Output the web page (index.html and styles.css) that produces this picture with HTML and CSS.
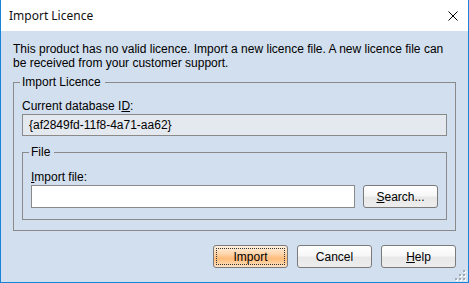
FILE: index.html
```html
<!DOCTYPE html>
<html>
<head>
<meta charset="utf-8">
<link rel="stylesheet" href="styles.css">
</head>
<body>
<div class="window">
  <div class="titlebar">
    <span class="title">Import Licence</span>
    <svg class="close" width="10" height="10" viewBox="0 0 10 10"><path d="M0.5 0.5 L9.5 9.5 M9.5 0.5 L0.5 9.5" stroke="#000" stroke-width="1" fill="none"/></svg>
  </div>
  <div class="content">
    <p class="message">This product has no valid licence. Import a new licence file. A new licence file can<br>be received from your customer support.</p>
    <fieldset class="group outer">
      <legend>Import Licence</legend>
      <label class="field-label">Current database I<u>D</u>:</label>
      <div class="readonly">{af2849fd-11f8-4a71-aa62}</div>
      <fieldset class="group inner">
        <legend>File</legend>
        <label class="field-label"><u>I</u>mport file:</label>
        <div class="file-row">
          <div class="input"></div>
          <button class="btn"><u>S</u>earch...</button>
        </div>
      </fieldset>
    </fieldset>
    <div class="actions">
      <button class="btn default"><span class="focus">Import</span></button>
      <button class="btn">Cancel</button>
      <button class="btn"><u>H</u>elp</button>
    </div>
  </div>
  <svg class="grip" width="11" height="11" viewBox="0 0 11 11">
    <g fill="#fff"><rect x="9" y="1" width="2" height="2"/><rect x="5" y="5" width="2" height="2"/><rect x="9" y="5" width="2" height="2"/><rect x="1" y="9" width="2" height="2"/><rect x="5" y="9" width="2" height="2"/><rect x="9" y="9" width="2" height="2"/></g>
    <g fill="#a3a9b3"><rect x="8" y="0" width="2" height="2"/><rect x="4" y="4" width="2" height="2"/><rect x="8" y="4" width="2" height="2"/><rect x="0" y="8" width="2" height="2"/><rect x="4" y="8" width="2" height="2"/><rect x="8" y="8" width="2" height="2"/></g>
  </svg>
</div>
</body>
</html>
```
FILE: styles.css
```css
body {
  margin: 0;
  font-family: "Liberation Sans", Arial, sans-serif;
  font-size: 12px;
  color: #000;
}
.window {
  position: relative;
  width: 469px;
  height: 283px;
  box-sizing: border-box;
  border: 1px solid #1883d7;
  border-top: none;
  background: #d2dfee;
  display: flex;
  flex-direction: column;
}
.titlebar {
  height: 31px;
  background: #fff;
  display: flex;
  align-items: center;
  justify-content: space-between;
  padding: 0 10px 0 8px;
}
.title {
  font-family: "Noto Sans", "Open Sans", sans-serif;
  font-size: 12px;
  color: #111;
}
.close { display: block; }
.content {
  padding: 11px 12px 0 12px;
}
.message {
  margin: 0;
  line-height: 14px;
  white-space: nowrap;
}
.group {
  margin: 0;
  border: 1px solid #8a8a8a;
  padding: 10px 8px 10px 8px;
  min-width: 0;
}
.group legend {
  padding: 0 4px 0 2px;
  margin-left: -2px;
  line-height: 14px;
}
.outer { margin-top: 5px; }
.inner {
  margin-top: 9px;
  padding-top: 11px;
  padding-bottom: 11px;
}
.field-label {
  display: block;
  line-height: 14px;
  margin-bottom: 1px;
}
.readonly {
  height: 22px;
  box-sizing: border-box;
  border: 1px solid #8a8a8a;
  background: #e4e8ef;
  padding: 0 6px;
  line-height: 20px;
}
.file-row {
  display: flex;
  gap: 8px;
}
.input {
  flex: 1;
  height: 23px;
  box-sizing: border-box;
  border: 1px solid #8a8a8a;
  background: #fff;
}
.btn {
  width: 75px;
  height: 23px;
  box-sizing: border-box;
  padding: 0;
  border: 1px solid #7a7a7a;
  border-radius: 3px;
  background: linear-gradient(#ffffff 0%, #f7f7f7 45%, #e8e8e8 55%, #ededed 100%);
  font-family: "Liberation Sans", Arial, sans-serif;
  font-size: 12px;
  color: #000;
  display: flex;
  align-items: center;
  justify-content: center;
}
.actions {
  margin-top: 14px;
  display: flex;
  justify-content: flex-end;
  gap: 9px;
}
.default {
  background: linear-gradient(#fff1e0 0%, #ffd3a6 40%, #ffbb78 60%, #ffe3c4 100%);
  padding: 2px;
}
.focus {
  display: flex;
  align-items: center;
  justify-content: center;
  width: 100%;
  height: 100%;
  box-sizing: border-box;
  border: 1px dotted #333;
}
.grip {
  position: absolute;
  right: 2px;
  bottom: 1px;
}
```
